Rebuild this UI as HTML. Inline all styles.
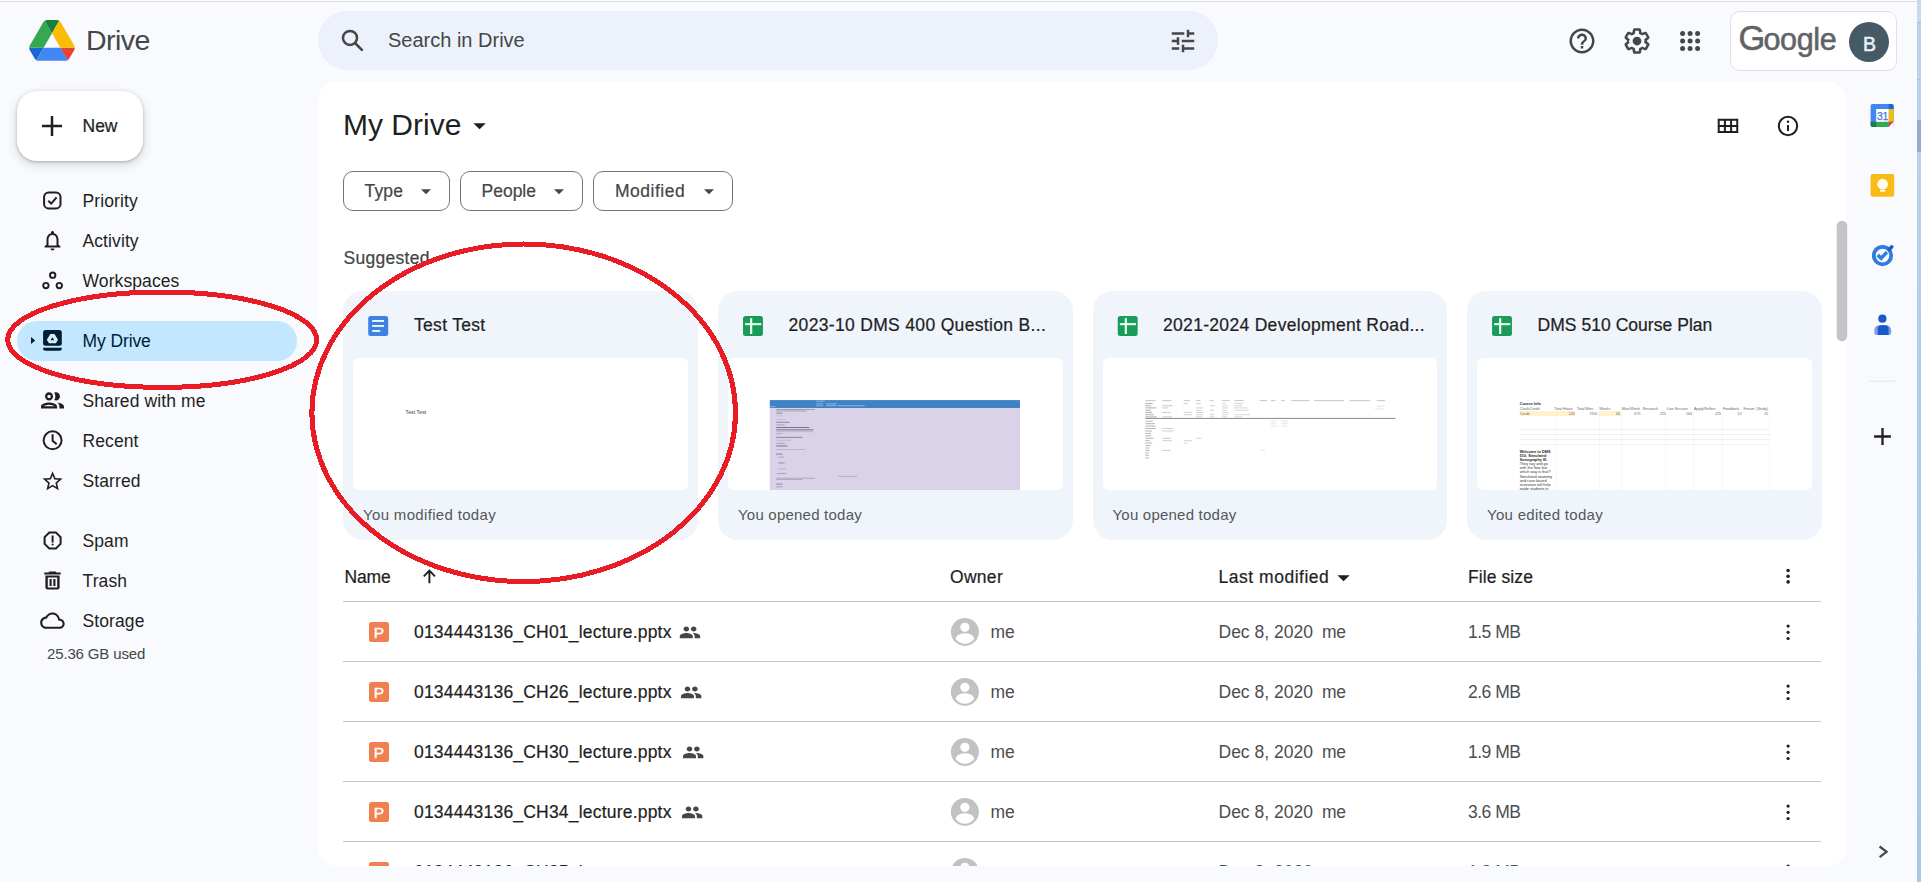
<!DOCTYPE html>
<html lang="en">
<head>
<meta charset="utf-8">
<title>My Drive - Google Drive</title>
<style>
*{box-sizing:border-box;margin:0;padding:0}
html,body{width:1921px;height:882px;overflow:hidden}
body{background:#f8fafd;font-family:"Liberation Sans",sans-serif;color:#1f1f1f;position:relative}
.abs{position:absolute}
.t{position:absolute;white-space:nowrap;line-height:1}
.m{-webkit-text-stroke:.22px currentColor}
svg{position:absolute;overflow:visible}
#topline{left:0;top:0;width:1921px;height:2px;background:linear-gradient(#fff 0,#fff 1px,#d9d9d9 1px,#d9d9d9 2px)}
#rstripe{left:1916.500px;top:0;width:4.500px;height:882px;background:linear-gradient(#c8daee 0,#c8daee 22px,#a9bfda 22px,#a9bfda 23px,#bcd2ea 23px,#bcd2ea 79px,#a9bfda 79px,#a9bfda 80px,#b9d0ea 80px,#b9d0ea 120px,#98aac5 120px,#98aac5 152px,#b9d0e8 152px,#a9c8e4 882px)}
#brand{left:86px;top:26px;font-size:28.5px;color:#444746;letter-spacing:-.55px}
#search{left:318px;top:11.200px;width:900px;height:58.600px;border-radius:29.300px;background:#ecf1fb}
#searchtxt{left:388px;top:30px;font-size:20px;color:#444746}
#acct{left:1730px;top:11px;width:167px;height:60px;border-radius:10px;background:#fff;border:1px solid #dfe1e6}
#avatar{left:1849px;top:22px;width:40px;height:40px;border-radius:50%;background:#455a64}
#avatarB{left:1849.500px;top:35px;width:40px;text-align:center;font-size:19.5px;color:#e8f0f8;-webkit-text-stroke:.5px #e8f0f8}
#gword{left:1738.500px;top:18px;font-size:34.4px;line-height:40px;color:#5f6368;-webkit-text-stroke:.55px #5f6368;letter-spacing:-1.8px}#gword span{font-size:30.5px;letter-spacing:-.35px}
#newbtn{left:17px;top:91px;width:126px;height:70px;border-radius:20px;background:#fff;box-shadow:0 1px 3px rgba(60,64,67,.35),0 4px 8px 2px rgba(60,64,67,.12)}
#newtxt{left:82.500px;top:118px;font-size:17.5px;color:#1f1f1f}
.nav{left:82.500px;font-size:17.5px;color:#1f1f1f;letter-spacing:.1px}
#sel{left:17px;top:321px;width:280px;height:40px;border-radius:20px;background:#c2e7ff}
#used{left:47px;top:646px;font-size:15px;color:#444746;letter-spacing:-.15px}
#panel{left:317.700px;top:81.300px;width:1529.500px;height:784.700px;border-radius:20px;background:#fff;overflow:hidden}
#title{left:343px;top:109.500px;font-size:30px;color:#1f1f1f}
.chip{position:absolute;top:171px;height:40px;border:1px solid #747775;border-radius:10px}
.chiptxt{top:183px;font-size:17.5px;color:#444746}
#sugg{left:343.500px;top:249.500px;font-size:17.5px;color:#444746;letter-spacing:.28px}
.card{position:absolute;top:291px;width:355px;height:249px;border-radius:20px;background:#f0f4fb}
.thumb{position:absolute;top:358px;width:335px;height:132px;border-radius:6px;background:#fff;overflow:hidden}
.ctitle{top:317px;font-size:17.5px;color:#1f1f1f}
.csub{top:506.6px;font-size:15px;color:#55585a}
.hdr{top:569px;font-size:17.5px;color:#1f1f1f}
.hline{position:absolute;left:343px;width:1478px;height:1px;background:#c7c7c7}
.fname{left:414px;font-size:17.5px;color:#1f1f1f;letter-spacing:.2px}
.cell{font-size:17.5px;color:#4b4e50}
.ppt{position:absolute;left:369px;width:20px;height:20px;border-radius:2.5px;background:#f0804f}
.ppt b{position:absolute;left:0;top:2.5px;width:20px;text-align:center;font-size:15.5px;font-weight:normal;-webkit-text-stroke:.4px #fff;line-height:1;color:#fff}
#botcover{left:0;top:866px;width:1917px;height:16px;background:#f8fafd}
#th4 i{position:absolute;display:block}#th4 span{position:absolute;white-space:nowrap;font-size:3.7px;line-height:1;color:#666}#th4 span.b{font-weight:bold;color:#222;font-size:3.8px}#th4 span.k{color:#333;font-size:3.8px}
#tt{left:405.500px;top:410px;font-size:5.3px;color:#444}
</style>
</head>
<body>
<div id="topline" class="abs"></div>
<div id="rstripe" class="abs"></div>

<!-- HEADER -->
<div id="brand" class="t">Drive</div>
<div id="search" class="abs"></div>
<div id="searchtxt" class="t">Search in Drive</div>
<div id="acct" class="abs"></div>
<div id="gword" class="t">G<span>oogle</span></div>
<div id="avatar" class="abs"></div>
<div id="avatarB" class="t">B</div>

<!-- SIDEBAR -->
<div id="newbtn" class="abs"></div>
<div id="newtxt" class="t m">New</div>
<div id="sel" class="abs"></div>
<div class="t nav" style="top:193px">Priority</div>
<div class="t nav" style="top:233px">Activity</div>
<div class="t nav" style="top:273px">Workspaces</div>
<div class="t nav" style="top:333px;color:#001d35;letter-spacing:-.1px">My Drive</div>
<div class="t nav" style="top:393px">Shared with me</div>
<div class="t nav" style="top:433px">Recent</div>
<div class="t nav" style="top:473px">Starred</div>
<div class="t nav" style="top:533px">Spam</div>
<div class="t nav" style="top:573px">Trash</div>
<div class="t nav" style="top:613px">Storage</div>
<div id="used" class="t">25.36 GB used</div>

<!-- MAIN PANEL -->
<div id="panel" class="abs"></div>
<div id="title" class="t">My Drive</div>
<div class="chip" style="left:343px;width:107px"></div>
<div class="chip" style="left:460px;width:123px"></div>
<div class="chip" style="left:593px;width:140px"></div>
<div class="t chiptxt m" style="left:364.500px;letter-spacing:.2px">Type</div>
<div class="t chiptxt m" style="left:481.500px;letter-spacing:0">People</div>
<div class="t chiptxt m" style="left:615px;letter-spacing:.5px">Modified</div>
<div id="sugg" class="t m">Suggested</div>

<!-- CARDS -->
<div class="card" style="left:343px"></div>
<div class="card" style="left:718px"></div>
<div class="card" style="left:1093px;width:354px"></div>
<div class="card" style="left:1467px"></div>
<div class="thumb" id="th1" style="left:353px"></div>
<div class="thumb" id="th2" style="left:728px"></div>
<div class="thumb" id="th3" style="left:1103px;width:334px"></div>
<div class="thumb" id="th4" style="left:1477px">
<i style="left:42.7px;top:52.9px;width:55.3px;height:4.7px;background:#fff2cc"></i>
<i style="left:122.3px;top:52.9px;width:21.6px;height:4.7px;background:#fff2cc"></i>
<i style="left:42.7px;top:71.2px;width:250.2px;height:.8px;background:rgba(0,0,0,.05)"></i>
<i style="left:42.7px;top:75.9px;width:250.2px;height:.8px;background:rgba(0,0,0,.05)"></i>
<i style="left:42.7px;top:81.2px;width:250.2px;height:.8px;background:rgba(0,0,0,.05)"></i>
<i style="left:42.7px;top:86.2px;width:250.2px;height:.8px;background:rgba(0,0,0,.05)"></i>
<i style="left:78.8px;top:52.9px;width:.8px;height:78.7px;background:rgba(0,0,0,.03)"></i>
<i style="left:121.9px;top:52.9px;width:.8px;height:78.7px;background:rgba(0,0,0,.03)"></i>
<i style="left:143.5px;top:52.9px;width:.8px;height:78.7px;background:rgba(0,0,0,.03)"></i>
<i style="left:188.4px;top:52.9px;width:.8px;height:78.7px;background:rgba(0,0,0,.03)"></i>
<i style="left:215.6px;top:52.9px;width:.8px;height:78.7px;background:rgba(0,0,0,.03)"></i>
<i style="left:244.7px;top:52.9px;width:.8px;height:78.7px;background:rgba(0,0,0,.03)"></i>
<i style="left:291.5px;top:52.9px;width:.8px;height:78.7px;background:rgba(0,0,0,.03)"></i>
<span class="b" style="left:42.7px;top:44.5px">Course Info</span>
<span class="" style="left:42.7px;top:49.6px">Clock/Credit</span>
<span class="" style="left:77.3px;top:49.6px">Total Hours</span>
<span class="" style="left:99.8px;top:49.6px">Total Mins</span>
<span class="" style="left:122.3px;top:49.6px">Weeks</span>
<span class="" style="left:144.8px;top:49.6px">Mins/Week</span>
<span class="" style="left:165.4px;top:49.6px">Research</span>
<span class="" style="left:189.8px;top:49.6px">Live Session</span>
<span class="" style="left:216.9px;top:49.6px">Apply/Reflect</span>
<span class="" style="left:246.0px;top:49.6px">Feedback</span>
<span class="" style="left:266.6px;top:49.6px">Forum&nbsp; (Study)</span>
<span class="" style="left:42.7px;top:54.8px">Credit</span>
<span class="" style="right:237.1px;top:54.8px">120</span>
<span class="" style="right:214.6px;top:54.8px">7200</span>
<span class="" style="right:192.1px;top:54.8px">16</span>
<span class="" style="right:171.5px;top:54.8px">675</span>
<span class="" style="right:146.2px;top:54.8px">225</span>
<span class="" style="right:119.9px;top:54.8px">164</span>
<span class="" style="right:90.9px;top:54.8px">225</span>
<span class="" style="right:70.3px;top:54.8px">52</span>
<span class="" style="right:44.0px;top:54.8px">25</span>
<span class="b" style="left:42.7px;top:93.1px">Welcome to DMS</span>
<span class="b" style="left:42.7px;top:97.2px">510, Simulated</span>
<span class="b" style="left:42.7px;top:101.2px">Sonography III.</span>
<span class="k" style="left:42.7px;top:105.3px">They say and go</span>
<span class="k" style="left:42.7px;top:109.3px">with the flow but</span>
<span class="k" style="left:42.7px;top:113.4px">which way is that?</span>
<span class="k" style="left:42.7px;top:117.5px">Simulated anatomy</span>
<span class="k" style="left:42.7px;top:121.5px">and case based</span>
<span class="k" style="left:42.7px;top:125.6px">scenarios will help</span>
<span class="k" style="left:42.7px;top:129.6px">guide students in</span>
</div>
<div id="tt" class="t">Test Test</div>
<div class="t ctitle m" style="left:414px;letter-spacing:0.3px">Test Test</div>
<div class="t ctitle m" style="left:788.5px;letter-spacing:0.33px">2023-10 DMS 400 Question B...</div>
<div class="t ctitle m" style="left:1163px;letter-spacing:0.31px">2021-2024 Development Road...</div>
<div class="t ctitle m" style="left:1537.5px;letter-spacing:0.04px">DMS 510 Course Plan</div>
<div class="t csub" style="left:363px;letter-spacing:0.33px">You modified today</div>
<div class="t csub" style="left:738px;letter-spacing:0.22px">You opened today</div>
<div class="t csub" style="left:1112.5px;letter-spacing:0.22px">You opened today</div>
<div class="t csub" style="left:1487px;letter-spacing:0.3px">You edited today</div>

<!-- LIST -->
<div class="t hdr m" style="left:344.500px;letter-spacing:-.15px">Name</div>
<div class="t hdr m" style="left:950px;letter-spacing:.29px">Owner</div>
<div class="t hdr m" style="left:1218.500px;letter-spacing:.52px">Last modified</div>
<div class="t hdr m" style="left:1468px;letter-spacing:.09px">File size</div>
<div class="hline" style="top:601px"></div>
<div class="hline" style="top:661px"></div>
<div class="hline" style="top:721px"></div>
<div class="hline" style="top:781px"></div>
<div class="hline" style="top:841px"></div>
<div class="ppt" style="top:622px"><b>P</b></div>
<div class="t fname m" style="top:624px">0134443136_CH01_lecture.pptx</div>
<div class="t cell" style="left:990.500px;top:624px">me</div>
<div class="t cell" style="left:1218.500px;top:624px">Dec 8, 2020</div>
<div class="t cell" style="left:1322px;top:624px;letter-spacing:-.4px">me</div>
<div class="t cell" style="left:1468px;top:624px;letter-spacing:-.5px">1.5 MB</div>
<div class="ppt" style="top:682px"><b>P</b></div>
<div class="t fname m" style="top:684px">0134443136_CH26_lecture.pptx</div>
<div class="t cell" style="left:990.500px;top:684px">me</div>
<div class="t cell" style="left:1218.500px;top:684px">Dec 8, 2020</div>
<div class="t cell" style="left:1322px;top:684px;letter-spacing:-.4px">me</div>
<div class="t cell" style="left:1468px;top:684px;letter-spacing:-.5px">2.6 MB</div>
<div class="ppt" style="top:742px"><b>P</b></div>
<div class="t fname m" style="top:744px">0134443136_CH30_lecture.pptx</div>
<div class="t cell" style="left:990.500px;top:744px">me</div>
<div class="t cell" style="left:1218.500px;top:744px">Dec 8, 2020</div>
<div class="t cell" style="left:1322px;top:744px;letter-spacing:-.4px">me</div>
<div class="t cell" style="left:1468px;top:744px;letter-spacing:-.5px">1.9 MB</div>
<div class="ppt" style="top:802px"><b>P</b></div>
<div class="t fname m" style="top:804px">0134443136_CH34_lecture.pptx</div>
<div class="t cell" style="left:990.500px;top:804px">me</div>
<div class="t cell" style="left:1218.500px;top:804px">Dec 8, 2020</div>
<div class="t cell" style="left:1322px;top:804px;letter-spacing:-.4px">me</div>
<div class="t cell" style="left:1468px;top:804px;letter-spacing:-.5px">3.6 MB</div>
<div class="ppt" style="top:862px"><b>P</b></div>
<div class="t fname m" style="top:864px">0134443136_CH35_lecture.pptx</div>
<div class="t cell" style="left:990.500px;top:864px">me</div>
<div class="t cell" style="left:1218.500px;top:864px">Dec 8, 2020</div>
<div class="t cell" style="left:1322px;top:864px;letter-spacing:-.4px">me</div>
<div class="t cell" style="left:1468px;top:864px;letter-spacing:-.5px">1.8 MB</div>

<!-- ICONS -->
<svg id="icons" width="1921" height="882" viewBox="0 0 1921 882" style="left:0;top:0">
<g id="thumb2"><rect x="769.8" y="400.1" width="250.2" height="89.9" fill="#d9d2e9"/><rect x="769.8" y="400.1" width="250.2" height="7.9" fill="#3f83c5"/>
<rect x="816.2" y="400.7" width="8.4" height="1" fill="#9cc3ea" opacity=".8"/>
<rect x="816.2" y="403.3" width="7.0" height="1" fill="#9cc3ea" opacity=".8"/>
<rect x="826.1" y="403.3" width="10.5" height="1" fill="#9cc3ea" opacity=".8"/>
<rect x="816.2" y="405.2" width="7.0" height="1" fill="#9cc3ea" opacity=".8"/>
<rect x="826.1" y="405.2" width="10.5" height="1" fill="#9cc3ea" opacity=".8"/>
<rect x="838.0" y="405.2" width="26.7" height="1" fill="#9cc3ea" opacity=".8"/>
<rect x="769.8" y="406.1" width="5.6" height="1" fill="#9cc3ea" opacity=".8"/>
<rect x="776.2" y="409.2" width="38.7" height="0.75" fill="#2a2440" opacity="0.40"/>
<rect x="776.2" y="410.6" width="30.2" height="0.75" fill="#2a2440" opacity="0.36"/>
<rect x="776.2" y="412.7" width="6.3" height="0.75" fill="#2a2440" opacity="0.58"/>
<rect x="776.2" y="415.5" width="6.3" height="0.75" fill="#2a2440" opacity="0.14"/>
<rect x="776.2" y="419.0" width="9.1" height="0.75" fill="#2a2440" opacity="0.14"/>
<rect x="776.2" y="421.8" width="13.4" height="0.75" fill="#2a2440" opacity="0.58"/>
<rect x="776.2" y="424.6" width="8.4" height="0.75" fill="#2a2440" opacity="0.36"/>
<rect x="776.2" y="427.0" width="33.0" height="0.9" fill="#2a2440" opacity="0.61"/>
<rect x="776.2" y="429.4" width="37.2" height="0.9" fill="#2a2440" opacity="0.61"/>
<rect x="776.2" y="431.4" width="37.2" height="0.75" fill="#2a2440" opacity="0.22"/>
<rect x="776.2" y="433.4" width="6.3" height="0.75" fill="#2a2440" opacity="0.29"/>
<rect x="776.2" y="436.9" width="26.0" height="0.75" fill="#2a2440" opacity="0.58"/>
<rect x="776.2" y="439.8" width="15.5" height="0.75" fill="#2a2440" opacity="0.18"/>
<rect x="776.2" y="442.9" width="8.4" height="0.75" fill="#2a2440" opacity="0.36"/>
<rect x="776.2" y="445.5" width="11.2" height="0.9" fill="#2a2440" opacity="0.61"/>
<rect x="776.2" y="449.2" width="28.8" height="0.75" fill="#2a2440" opacity="0.22"/>
<rect x="776.2" y="453.7" width="6.3" height="0.75" fill="#2a2440" opacity="0.58"/>
<rect x="778.3" y="456.7" width="5.6" height="0.75" fill="#2a2440" opacity="0.29"/>
<rect x="778.3" y="462.6" width="6.3" height="0.75" fill="#2a2440" opacity="0.50"/>
<rect x="778.3" y="468.5" width="7.7" height="0.75" fill="#2a2440" opacity="0.22"/>
<rect x="776.9" y="473.1" width="9.1" height="0.75" fill="#2a2440" opacity="0.36"/>
<rect x="776.2" y="477.8" width="38.7" height="0.75" fill="#2a2440" opacity="0.32"/>
<rect x="776.2" y="479.2" width="26.0" height="0.75" fill="#2a2440" opacity="0.29"/>
<rect x="776.2" y="483.7" width="6.3" height="0.75" fill="#2a2440" opacity="0.58"/>
<rect x="776.2" y="486.5" width="6.3" height="0.75" fill="#2a2440" opacity="0.36"/>
<rect x="838.0" y="475.9" width="19.0" height="0.75" fill="#2a2440" opacity="0.25"/>
</g>
<g id="thumb3">
<rect x="1145.3" y="400.1" width="10.3" height="1" fill="#9a9a9a" opacity=".55"/>
<rect x="1162.2" y="400.1" width="9.4" height="1" fill="#9a9a9a" opacity=".55"/>
<rect x="1183.7" y="400.1" width="6.6" height="1" fill="#9a9a9a" opacity=".55"/>
<rect x="1195.9" y="400.1" width="4.7" height="1" fill="#9a9a9a" opacity=".55"/>
<rect x="1209.9" y="400.1" width="3.7" height="1" fill="#9a9a9a" opacity=".55"/>
<rect x="1222.1" y="400.1" width="7.5" height="1" fill="#9a9a9a" opacity=".55"/>
<rect x="1234.3" y="400.1" width="9.4" height="1" fill="#9a9a9a" opacity=".55"/>
<rect x="1259.6" y="400.1" width="7.5" height="1" fill="#9a9a9a" opacity=".55"/>
<rect x="1270.8" y="400.1" width="4.7" height="1" fill="#9a9a9a" opacity=".55"/>
<rect x="1281.2" y="400.1" width="3.7" height="1" fill="#9a9a9a" opacity=".55"/>
<rect x="1291.5" y="400.1" width="17.8" height="1" fill="#9a9a9a" opacity=".55"/>
<rect x="1314.0" y="400.1" width="30.0" height="1" fill="#9a9a9a" opacity=".55"/>
<rect x="1349.6" y="400.1" width="20.6" height="1" fill="#9a9a9a" opacity=".55"/>
<rect x="1376.7" y="400.1" width="8.4" height="1" fill="#9a9a9a" opacity=".55"/>
<rect x="1145.3" y="402.9" width="7.3" height="1" fill="#777" opacity="0.6"/>
<rect x="1183.7" y="402.9" width="4.6" height="1" fill="#777" opacity="0.35"/>
<rect x="1195.9" y="402.9" width="4.8" height="1" fill="#777" opacity="0.35"/>
<rect x="1222.1" y="402.9" width="3.4" height="1" fill="#777" opacity="0.3"/>
<rect x="1234.3" y="402.9" width="8.2" height="1" fill="#777" opacity="0.3"/>
<rect x="1145.3" y="405.2" width="5.8" height="1" fill="#777" opacity="0.6"/>
<rect x="1162.2" y="405.2" width="10.7" height="1" fill="#777" opacity="0.4"/>
<rect x="1209.9" y="405.2" width="5.2" height="1" fill="#777" opacity="0.35"/>
<rect x="1222.1" y="405.2" width="5.0" height="1" fill="#777" opacity="0.3"/>
<rect x="1234.3" y="405.2" width="8.0" height="1" fill="#777" opacity="0.3"/>
<rect x="1145.3" y="407.4" width="10.9" height="1" fill="#777" opacity="0.6"/>
<rect x="1162.2" y="407.4" width="6.1" height="1" fill="#777" opacity="0.4"/>
<rect x="1195.9" y="407.4" width="6.8" height="1" fill="#777" opacity="0.35"/>
<rect x="1222.1" y="407.4" width="6.0" height="1" fill="#777" opacity="0.3"/>
<rect x="1234.3" y="407.4" width="12.8" height="1" fill="#777" opacity="0.3"/>
<rect x="1145.3" y="409.7" width="5.6" height="1" fill="#777" opacity="0.6"/>
<rect x="1195.9" y="409.7" width="5.1" height="1" fill="#777" opacity="0.35"/>
<rect x="1209.9" y="409.7" width="4.1" height="1" fill="#777" opacity="0.35"/>
<rect x="1222.1" y="409.7" width="4.6" height="1" fill="#777" opacity="0.3"/>
<rect x="1234.3" y="409.7" width="14.3" height="1" fill="#777" opacity="0.3"/>
<rect x="1145.3" y="411.9" width="6.8" height="1" fill="#777" opacity="0.6"/>
<rect x="1162.2" y="411.9" width="8.7" height="1" fill="#777" opacity="0.4"/>
<rect x="1183.7" y="411.9" width="8.2" height="1" fill="#777" opacity="0.35"/>
<rect x="1195.9" y="411.9" width="7.5" height="1" fill="#777" opacity="0.35"/>
<rect x="1222.1" y="411.9" width="6.5" height="1" fill="#777" opacity="0.3"/>
<rect x="1145.3" y="414.2" width="8.4" height="1" fill="#777" opacity="0.6"/>
<rect x="1183.7" y="414.2" width="8.4" height="1" fill="#777" opacity="0.35"/>
<rect x="1195.9" y="414.2" width="7.0" height="1" fill="#777" opacity="0.35"/>
<rect x="1209.9" y="414.2" width="4.5" height="1" fill="#777" opacity="0.35"/>
<rect x="1222.1" y="414.2" width="5.8" height="1" fill="#777" opacity="0.3"/>
<rect x="1234.3" y="414.2" width="15.7" height="1" fill="#777" opacity="0.3"/>
<rect x="1145.3" y="416.4" width="11.5" height="1" fill="#777" opacity="0.6"/>
<rect x="1162.2" y="416.4" width="9.6" height="1" fill="#777" opacity="0.4"/>
<rect x="1195.9" y="416.4" width="6.0" height="1" fill="#777" opacity="0.35"/>
<rect x="1209.9" y="416.4" width="4.8" height="1" fill="#777" opacity="0.35"/>
<rect x="1222.1" y="416.4" width="4.9" height="1" fill="#777" opacity="0.3"/>
<rect x="1234.3" y="416.4" width="7.7" height="1" fill="#777" opacity="0.3"/>
<rect x="1145.3" y="417.9" width="250.2" height="1" fill="#8a8a8a"/>
<rect x="1145.3" y="420.7" width="7.5" height="1" fill="#777" opacity="0.54"/>
<rect x="1145.3" y="423.2" width="9.7" height="1" fill="#777" opacity="0.54"/>
<rect x="1145.3" y="425.6" width="10.4" height="1" fill="#777" opacity="0.54"/>
<rect x="1145.3" y="428.0" width="10.5" height="1" fill="#777" opacity="0.54"/>
<rect x="1162.2" y="428.0" width="10.4" height="1" fill="#777" opacity="0.36"/>
<rect x="1145.3" y="430.5" width="6.7" height="1" fill="#777" opacity="0.54"/>
<rect x="1162.2" y="430.5" width="11.0" height="1" fill="#777" opacity="0.36"/>
<rect x="1145.3" y="432.9" width="5.8" height="1" fill="#777" opacity="0.54"/>
<rect x="1145.3" y="435.3" width="6.0" height="1" fill="#777" opacity="0.54"/>
<rect x="1145.3" y="437.8" width="8.2" height="1" fill="#777" opacity="0.54"/>
<rect x="1162.2" y="437.8" width="9.1" height="1" fill="#777" opacity="0.36"/>
<rect x="1195.9" y="437.8" width="5.7" height="1" fill="#777" opacity="0.32"/>
<rect x="1145.3" y="440.2" width="4.5" height="1" fill="#777" opacity="0.54"/>
<rect x="1162.2" y="440.2" width="9.8" height="1" fill="#777" opacity="0.36"/>
<rect x="1183.7" y="440.2" width="8.1" height="1" fill="#777" opacity="0.32"/>
<rect x="1145.3" y="442.6" width="7.0" height="1" fill="#777" opacity="0.54"/>
<rect x="1183.7" y="442.6" width="3.7" height="1" fill="#777" opacity="0.32"/>
<rect x="1145.3" y="445.1" width="5.6" height="1" fill="#777" opacity="0.54"/>
<rect x="1145.3" y="447.5" width="4.1" height="1" fill="#777" opacity="0.54"/>
<rect x="1145.3" y="449.9" width="4.3" height="1" fill="#777" opacity="0.54"/>
<rect x="1162.2" y="449.9" width="8.6" height="1" fill="#777" opacity="0.36"/>
<rect x="1145.3" y="452.4" width="3.7" height="1" fill="#777" opacity="0.54"/>
<rect x="1145.3" y="454.8" width="3.7" height="1" fill="#777" opacity="0.54"/>
<rect x="1145.3" y="457.3" width="3.7" height="1" fill="#777" opacity="0.54"/>
<rect x="1270.8" y="420.7" width="5.6" height="1" fill="#999" opacity=".25"/>
<rect x="1281.2" y="420.7" width="6.6" height="1" fill="#999" opacity=".25"/>
<rect x="1270.8" y="423.2" width="5.6" height="1" fill="#999" opacity=".25"/>
<rect x="1281.2" y="423.2" width="6.6" height="1" fill="#999" opacity=".25"/>
<rect x="1270.8" y="425.6" width="5.6" height="1" fill="#999" opacity=".25"/>
<rect x="1281.2" y="425.6" width="6.6" height="1" fill="#999" opacity=".25"/>
<rect x="1259.6" y="449.8" width="5.6" height="1" fill="#999" opacity=".25"/>
<rect x="1376.7" y="405.7" width="7.5" height="1" fill="#999" opacity=".25"/>
<rect x="1374.9" y="408.5" width="9.4" height="1" fill="#999" opacity=".25"/>
</g>
<!-- Drive logo -->
<g transform="translate(29.2,20.1) scale(0.5223)">
<path d="m6.6 66.85 3.85 6.65c.8 1.4 1.95 2.5 3.3 3.3l13.750-23.8h-27.500c0 1.550.4 3.100 1.200 4.500z" fill="#1967d2"/>
<path d="m43.650 25-13.750-23.800c-1.350.8-2.500 1.900-3.300 3.300l-25.400 44a9.060 9.060 0 0 0 -1.200 4.500h27.500z" fill="#34a853"/>
<path d="m73.550 76.800c1.350-.8 2.500-1.900 3.300-3.300l1.600-2.750 7.650-13.250c.8-1.400 1.200-2.950 1.200-4.500h-27.502l5.852 11.500z" fill="#ea4335"/>
<path d="m43.650 25 13.750-23.800c-1.350-.8-2.900-1.200-4.500-1.200h-18.500c-1.600 0-3.150.45-4.500 1.200z" fill="#188038"/>
<path d="m59.800 53h-32.300l-13.750 23.800c1.350.8 2.900 1.200 4.500 1.200h50.800c1.600 0 3.150-.45 4.500-1.200z" fill="#4285f4"/>
<path d="m73.400 26.500-12.700-22c-.8-1.400-1.950-2.500-3.300-3.300l-13.750 23.800 16.150 28h27.450c0-1.550-.4-3.100-1.200-4.500z" fill="#fbbc04"/>
</g>
<!-- search -->
<g fill="none" stroke="#444746" stroke-width="2.5">
<circle cx="350" cy="37.9" r="7"/><path d="M355 43 L362.6 50.6"/>
</g>
<!-- tune -->
<g transform="translate(1168,26) scale(1.25)" fill="#444746"><path d="M3 17v2h6v-2H3zM3 5v2h10V5H3zm10 16v-2h8v-2h-8v-2h-2v6h2zM7 9v2H3v2h4v2h2V9H7zm14 4v-2H11v2h10zm-6-4h2V7h4V5h-4V3h-2v6z"/></g>
<!-- help -->
<g transform="translate(1567,26) scale(1.25)" fill="#444746"><path d="M11 18h2v-2h-2v2zm1-16C6.480 2 2 6.480 2 12s4.480 10 10 10 10-4.480 10-10S17.520 2 12 2zm0 18c-4.410 0-8-3.590-8-8s3.590-8 8-8 8 3.590 8 8-3.590 8-8 8zm0-14c-2.210 0-4 1.790-4 4h2c0-1.100.9-2 2-2s2 .9 2 2c0 2-3 1.750-3 5h2c0-2.250 3-2.500 3-5 0-2.210-1.790-4-4-4z"/></g>
<!-- settings gear -->
<g transform="translate(1622,26) scale(1.25)" fill="#444746"><path d="M13.850 22.250h-3.700c-.74 0-1.360-.54-1.450-1.270l-.27-1.890c-.27-.14-.53-.29-.79-.46l-1.800.72c-.7.260-1.470-.03-1.810-.65L2.200 15.530c-.35-.66-.2-1.440.36-1.880l1.530-1.190c-.01-.15-.02-.3-.02-.46 0-.15.010-.31.020-.46l-1.520-1.190c-.59-.45-.74-1.260-.37-1.880l1.850-3.190c.34-.62 1.110-.9 1.790-.63l1.810.73c.26-.17.520-.32.780-.46l.27-1.910c.09-.7.710-1.250 1.440-1.250h3.700c.74 0 1.360.54 1.450 1.270l.27 1.890c.27.140.53.290.79.460l1.800-.72c.71-.26 1.480.03 1.820.65l1.840 3.180c.36.660.2 1.440-.36 1.880l-1.520 1.190c.1.150.2.300.2.460s-.1.310-.2.460l1.520 1.190c.56.450.72 1.230.37 1.860l-1.860 3.220c-.34.620-1.110.9-1.800.63l-1.800-.72c-.26.170-.52.320-.78.460l-.27 1.910c-.1.680-.72 1.220-1.460 1.220zm-3.230-2h2.760l.37-2.550.53-.22c.44-.18.880-.44 1.340-.78l.45-.34 2.380.96 1.380-2.400-2.030-1.580.07-.56c.03-.26.060-.51.060-.78s-.03-.53-.06-.78l-.07-.56 2.030-1.580-1.390-2.400-2.390.96-.45-.35c-.42-.32-.87-.58-1.330-.77l-.52-.22-.37-2.550h-2.760l-.37 2.550-.53.210c-.44.190-.88.440-1.340.79l-.45.330-2.380-.95-1.390 2.390 2.030 1.580-.07.560a7 7 0 0 0-.6.790c0 .26.020.53.060.78l.7.560-2.030 1.580 1.380 2.400 2.390-.96.450.35c.43.330.86.580 1.330.77l.53.220.38 2.550z"/><circle cx="12" cy="12" r="3.500"/></g>
<!-- apps -->
<g fill="#444746">
<circle cx="1682.600" cy="33.400" r="2.500"/><circle cx="1690.100" cy="33.400" r="2.500"/><circle cx="1697.600" cy="33.400" r="2.500"/>
<circle cx="1682.600" cy="40.900" r="2.500"/><circle cx="1690.100" cy="40.900" r="2.500"/><circle cx="1697.600" cy="40.900" r="2.500"/>
<circle cx="1682.600" cy="48.400" r="2.500"/><circle cx="1690.100" cy="48.400" r="2.500"/><circle cx="1697.600" cy="48.400" r="2.500"/>
</g>
<!-- New plus -->
<g stroke="#1f1f1f" stroke-width="2.500" fill="none"><path d="M42 126H62M52 116V136"/></g>
<!-- Priority -->
<g fill="none" stroke="#1f1f1f" stroke-width="2"><rect x="44.100" y="192.600" width="16.400" height="15.800" rx="4.500"/><path d="M48.300 200.800 L51.200 203.600 L56.600 197.300"/></g>
<!-- Activity bell -->
<g transform="translate(40.500,228.500)" fill="#1f1f1f"><path d="M12 22c1.100 0 2-.9 2-2h-4c0 1.100.9 2 2 2zm6-6v-5c0-3.070-1.630-5.640-4.500-6.320V4c0-.83-.67-1.500-1.500-1.500s-1.500.67-1.500 1.500v.68C7.640 5.360 6 7.920 6 11v5l-2 2v1h16v-1l-2-2zm-2 1H8v-6c0-2.480 1.510-4.500 4-4.500s4 2.020 4 4.500v6z"/></g>
<!-- Workspaces -->
<g fill="none" stroke="#1f1f1f" stroke-width="1.900"><circle cx="52.700" cy="275.200" r="2.700"/><circle cx="45.900" cy="285.600" r="2.700"/><circle cx="59.300" cy="285.600" r="2.700"/></g>
<!-- My Drive -->
<g fill="#001d35">
<path d="M31 337 L35.200 340.500 L31 344z"/>
<rect x="43.100" y="330" width="18.700" height="15.700" rx="2.500"/>
<path d="M43.100 347.800h18.700v0.500a2.500 2.500 0 0 1-2.500 2.500h-13.700a2.500 2.500 0 0 1-2.500-2.500z"/>
</g>
<path d="M50.300 333.900h4.200l3.500 5.900-2.100 3.500h-7l-2.100-3.500zM52.400 337.200l-1.800 3h3.600z" fill="#d6ecfb" fill-rule="evenodd"/>
<!-- Shared -->
<g transform="translate(38.700,386.600) scale(1.150)" fill="#1f1f1f"><path d="M9 13.750c-2.340 0-7 1.170-7 3.500V19h14v-1.750c0-2.330-4.660-3.500-7-3.500zM4.340 17c.84-.58 2.870-1.250 4.660-1.250s3.820.67 4.660 1.250H4.340zM9 12c1.930 0 3.500-1.570 3.500-3.500S10.930 5 9 5 5.500 6.570 5.500 8.500 7.070 12 9 12zm0-5c.83 0 1.500.67 1.500 1.500S9.830 10 9 10s-1.500-.67-1.500-1.500S8.170 7 9 7zm7.040 6.810c1.160.84 1.960 1.960 1.960 3.440V19h4v-1.750c0-2.020-3.500-3.170-5.960-3.440zM15 12c1.930 0 3.500-1.570 3.500-3.500S16.930 5 15 5c-.54 0-1.040.13-1.500.35.630.89 1 1.980 1 3.150s-.37 2.260-1 3.150c.46.220.96.350 1.500.350z"/></g>
<!-- Recent -->
<g fill="none" stroke="#1f1f1f" stroke-width="2"><circle cx="52.600" cy="440.300" r="9"/><path d="M52.600 434.300V440.700L56.700 444.300"/></g>
<!-- Starred -->
<g transform="translate(40.600,469.300)" fill="#1f1f1f"><path d="M22 9.240l-7.190-.62L12 2 9.190 8.630 2 9.240l5.460 4.730L5.820 21 12 17.270 18.180 21l-1.630-7.030L22 9.240zM12 15.400l-3.760 2.270 1-4.280-3.320-2.880 4.380-.38L12 6.100l1.710 4.040 4.380.38-3.320 2.880 1 4.280L12 15.400z"/></g>
<!-- Spam -->
<g transform="translate(40.600,528.500)" fill="#1f1f1f"><path d="M15.730 3H8.270L3 8.270v7.460L8.270 21h7.460L21 15.730V8.270L15.730 3zM19 14.900L14.900 19H9.100L5 14.900V9.100L9.100 5h5.800L19 9.100v5.800z"/><circle cx="12" cy="16" r="1.100"/><path d="M11 7h2v7h-2z"/></g>
<!-- Trash -->
<g transform="translate(52.500,568.400) scale(1.18,1) translate(-12,0)" fill="#1f1f1f"><path d="M16 9v10H8V9h8m-1.500-6h-5l-1 1H5v2h14V4h-3.500l-1-1zM18 7H6v12c0 1.100.9 2 2 2h8c1.100 0 2-.9 2-2V7z"/><path d="M9.500 10.500h1.800v7h-1.800zM12.700 10.500h1.800v7h-1.800z"/></g>
<!-- Storage cloud -->
<g transform="translate(40.200,608.400) scale(1.020)" fill="#1f1f1f"><path d="M12 6c2.620 0 4.880 1.860 5.390 4.430l.3 1.500 1.530.11c1.560.1 2.780 1.410 2.780 2.960 0 1.650-1.350 3-3 3H6c-2.210 0-4-1.790-4-4 0-2.050 1.530-3.760 3.560-3.970l1.070-.11.500-.95C8.080 7.140 9.940 6 12 6m0-2C9.110 4 6.600 5.640 5.350 8.040 2.340 8.360 0 10.910 0 14c0 3.310 2.690 6 6 6h13c2.760 0 5-2.240 5-5 0-2.640-2.050-4.780-4.650-4.960C18.670 6.590 15.640 4 12 4z"/></g>
<!-- title caret + chip carets -->
<g fill="#1f1f1f"><path d="M473.400 123.200h12.400l-6.200 6.100z"/></g>
<g fill="#444746"><path d="M421 189.300h10l-5 5z"/><path d="M554 189.300h10l-5 5z"/><path d="M704 189.300h10l-5 5z"/></g>
<!-- grid + info -->
<g fill="none" stroke="#1f1f1f" stroke-width="2"><rect x="1718.700" y="119.750" width="18.550" height="12.250"/><path d="M1724.900 119.750v12.250M1731.100 119.750v12.250M1718.700 125.900h18.550"/><circle cx="1788" cy="126" r="9.200"/></g>
<g fill="#1f1f1f"><circle cx="1788" cy="121.800" r="1.200"/><rect x="1787" y="125" width="2" height="6"/></g>
<!-- sort arrows -->
<g fill="none" stroke="#1f1f1f" stroke-width="1.900"><path d="M429.400 583.300V571M423.800 576.300L429.400 570.700L435 576.300"/></g>
<g fill="#1f1f1f"><path d="M1337.400 575.200h12.300l-6.150 6.100z"/></g>
<!-- header 3 dots + row dots -->
<g fill="#1f1f1f"><circle cx="1788.100" cy="570.500" r="1.800"/><circle cx="1788.100" cy="576.200" r="1.800"/><circle cx="1788.100" cy="581.900" r="1.800"/></g>
<g fill="#1f1f1f"><circle cx="1788.100" cy="626.1" r="1.600"/><circle cx="1788.100" cy="632.3" r="1.600"/><circle cx="1788.100" cy="638.5" r="1.600"/></g>
<g transform="translate(678.9,622.2) scale(0.925,0.84)" fill="#444746"><path d="M16 11c1.660 0 2.990-1.340 2.990-3S17.660 5 16 5c-1.660 0-3 1.340-3 3s1.340 3 3 3zm-8 0c1.660 0 2.990-1.340 2.990-3S9.660 5 8 5C6.340 5 5 6.340 5 8s1.340 3 3 3zm0 2c-2.330 0-7 1.170-7 3.500V19h14v-2.500c0-2.330-4.670-3.500-7-3.500zm8 0c-.29 0-.62.020-.97.050 1.160.84 1.970 1.970 1.970 3.450V19h6v-2.500c0-2.330-4.670-3.500-7-3.500z"/></g>
<g><circle cx="964.900" cy="631.9" r="14" fill="#c2c2c2"/><circle cx="964.900" cy="627.3" r="4.600" fill="#fff"/><path d="M955.700 639.1c0-4.200 6.100-5.800 9.200-5.800s9.200 1.600 9.200 5.800a11.500 11.500 0 0 1-18.400 0z" fill="#fff"/></g>
<g fill="#1f1f1f"><circle cx="1788.100" cy="686.1" r="1.600"/><circle cx="1788.100" cy="692.3" r="1.600"/><circle cx="1788.100" cy="698.5" r="1.600"/></g>
<g transform="translate(680.1,682.2) scale(0.925,0.84)" fill="#444746"><path d="M16 11c1.660 0 2.990-1.340 2.990-3S17.660 5 16 5c-1.660 0-3 1.340-3 3s1.340 3 3 3zm-8 0c1.660 0 2.990-1.340 2.990-3S9.660 5 8 5C6.340 5 5 6.340 5 8s1.340 3 3 3zm0 2c-2.330 0-7 1.170-7 3.500V19h14v-2.500c0-2.330-4.670-3.500-7-3.500zm8 0c-.29 0-.62.020-.97.050 1.160.84 1.970 1.970 1.970 3.450V19h6v-2.500c0-2.330-4.670-3.500-7-3.500z"/></g>
<g><circle cx="964.900" cy="691.9" r="14" fill="#c2c2c2"/><circle cx="964.900" cy="687.3" r="4.600" fill="#fff"/><path d="M955.700 699.1c0-4.200 6.100-5.800 9.200-5.800s9.200 1.600 9.200 5.800a11.500 11.500 0 0 1-18.400 0z" fill="#fff"/></g>
<g fill="#1f1f1f"><circle cx="1788.100" cy="746.1" r="1.600"/><circle cx="1788.100" cy="752.3" r="1.600"/><circle cx="1788.100" cy="758.5" r="1.600"/></g>
<g transform="translate(682.1,742.2) scale(0.925,0.84)" fill="#444746"><path d="M16 11c1.660 0 2.990-1.340 2.990-3S17.660 5 16 5c-1.660 0-3 1.340-3 3s1.340 3 3 3zm-8 0c1.660 0 2.990-1.340 2.990-3S9.660 5 8 5C6.340 5 5 6.340 5 8s1.340 3 3 3zm0 2c-2.330 0-7 1.170-7 3.500V19h14v-2.500c0-2.330-4.670-3.500-7-3.500zm8 0c-.29 0-.62.020-.97.050 1.160.84 1.970 1.970 1.970 3.450V19h6v-2.500c0-2.330-4.670-3.500-7-3.500z"/></g>
<g><circle cx="964.900" cy="751.9" r="14" fill="#c2c2c2"/><circle cx="964.900" cy="747.3" r="4.600" fill="#fff"/><path d="M955.700 759.1c0-4.200 6.100-5.800 9.200-5.800s9.200 1.600 9.200 5.800a11.500 11.500 0 0 1-18.400 0z" fill="#fff"/></g>
<g fill="#1f1f1f"><circle cx="1788.100" cy="806.1" r="1.600"/><circle cx="1788.100" cy="812.3" r="1.600"/><circle cx="1788.100" cy="818.5" r="1.600"/></g>
<g transform="translate(681.1,802.2) scale(0.925,0.84)" fill="#444746"><path d="M16 11c1.660 0 2.990-1.340 2.990-3S17.660 5 16 5c-1.660 0-3 1.340-3 3s1.340 3 3 3zm-8 0c1.660 0 2.990-1.340 2.990-3S9.660 5 8 5C6.340 5 5 6.340 5 8s1.340 3 3 3zm0 2c-2.330 0-7 1.170-7 3.500V19h14v-2.500c0-2.330-4.670-3.500-7-3.500zm8 0c-.29 0-.62.020-.97.050 1.160.84 1.970 1.970 1.970 3.450V19h6v-2.500c0-2.330-4.670-3.500-7-3.500z"/></g>
<g><circle cx="964.900" cy="811.9" r="14" fill="#c2c2c2"/><circle cx="964.900" cy="807.3" r="4.600" fill="#fff"/><path d="M955.700 819.1c0-4.200 6.100-5.800 9.200-5.800s9.200 1.600 9.200 5.800a11.500 11.500 0 0 1-18.400 0z" fill="#fff"/></g>
<g><circle cx="964.900" cy="871.9" r="14" fill="#c2c2c2"/><circle cx="964.900" cy="867.3" r="4.600" fill="#fff"/></g>
<g fill="#1f1f1f"><circle cx="1788.100" cy="866.1" r="1.600"/></g>
<!-- Calendar -->
<g>
<rect x="1870.600" y="104" width="23" height="23" rx="2" fill="#4285f4"/>
<rect x="1888.700" y="109" width="4.900" height="12.800" fill="#fbbc04"/>
<rect x="1876.200" y="121.800" width="12.500" height="5.200" fill="#34a853"/>
<path d="M1870.600 121.800h5.600v5.200h-3.600a2 2 0 0 1-2-2z" fill="#188038"/>
<path d="M1888.700 104h2.900a2 2 0 0 1 2 2v3h-4.900z" fill="#1967d2"/>
<path d="M1888.700 121.800h4.900l-4.900 5.200z" fill="#ea4335"/>
<path d="M1893.600 121.800v5.200h-4.900z" fill="#f8fafd"/>
<rect x="1876.200" y="109" width="12.500" height="12.800" fill="#fff"/>
<text x="1882.400" y="119.600" font-family="Liberation Sans, sans-serif" font-size="10.500" fill="#3f74d1" stroke="#3f74d1" stroke-width=".25" text-anchor="middle" letter-spacing="-0.500">31</text>
</g>
<!-- Keep -->
<g>
<rect x="1870.600" y="174" width="23.600" height="22.800" rx="2" fill="#f9bb16"/>
<circle cx="1882.600" cy="184.200" r="5.400" fill="#fffcf0"/>
<rect x="1880" y="190" width="5.200" height="1.700" fill="#fffcf0"/>
</g>
<!-- Tasks -->
<g>
<circle cx="1882.500" cy="255.600" r="8.700" fill="none" stroke="#2f7de1" stroke-width="3.800"/>
<path d="M1877.700 254.900l3.400 3.400 5.800-6.200" fill="none" stroke="#2f7de1" stroke-width="3.500"/>
<path d="M1889.500 249.200l2.300-2.400" stroke="#1a5fc9" stroke-width="3.600" stroke-linecap="round"/>
</g>
<!-- Contacts -->
<g>
<path d="M1874.300 332.400v-2.100a5 5 0 0 1 5-5h6.900a5 5 0 0 1 5 5v2.100a2.500 2.500 0 0 1-2.500 2.500h-11.900a2.500 2.500 0 0 1-2.500-2.500z" fill="#7f9fe6"/>
<path d="M1877.800 334.900v-6a3.600 3.600 0 0 1 3.600-3.600h3.600a3.600 3.600 0 0 1 3.600 3.600v6z" fill="#1a57c9"/>
<circle cx="1882.400" cy="318.700" r="4.100" fill="#1a57c9"/>
</g>
<rect x="1869.500" y="380.700" width="26.400" height="1" fill="#e2e5ea"/>
<path d="M1874.100 436.500h16.800M1882.500 428.100v16.800" stroke="#1f1f1f" stroke-width="2.300" fill="none"/>
<path d="M1879.600 846.500l7 5.300-7 5.400" transform="" stroke="#444746" stroke-width="2.200" fill="none"/>
<!-- scrollbar thumb -->
<rect x="1836.700" y="220.800" width="10.500" height="120.500" rx="5.200" fill="#c4c4c4"/>
<!-- Docs icon -->
<g>
<rect x="368.200" y="316" width="20" height="20" rx="2.500" fill="#4080e4"/>
<rect x="372.200" y="320" width="11.800" height="1.900" fill="#e6ffff"/>
<rect x="372.200" y="325" width="11.800" height="1.900" fill="#e6ffff"/>
<rect x="372.200" y="330" width="8" height="1.900" fill="#e6ffff"/>
</g>
<g><rect x="743.05" y="316" width="19.900" height="20.100" rx="2.500" fill="#1a9b59"/><rect x="745.15" y="323.100" width="16.100" height="2.100" fill="#e6fff0"/><rect x="750.05" y="318.200" width="2.200" height="15.800" fill="#e6fff0"/></g>
<g><rect x="1117.75" y="316" width="19.900" height="20.100" rx="2.500" fill="#1a9b59"/><rect x="1119.85" y="323.100" width="16.100" height="2.100" fill="#e6fff0"/><rect x="1124.75" y="318.200" width="2.200" height="15.800" fill="#e6fff0"/></g>
<g><rect x="1492.05" y="316" width="19.900" height="20.100" rx="2.500" fill="#1a9b59"/><rect x="1494.15" y="323.100" width="16.100" height="2.100" fill="#e6fff0"/><rect x="1499.05" y="318.200" width="2.200" height="15.800" fill="#e6fff0"/></g>
</svg>

<div id="botcover" class="abs"></div>
<!-- RED ANNOTATIONS -->
<svg id="anno" width="1921" height="882" viewBox="0 0 1921 882" style="left:0;top:0" shape-rendering="crispEdges">
<ellipse cx="162.200" cy="339.700" rx="154.500" ry="47.700" fill="none" stroke="#e81c24" stroke-width="5"/>
<ellipse cx="523.700" cy="412.800" rx="211.800" ry="168.800" fill="none" stroke="#e81c24" stroke-width="5"/>
</svg>
</body>
</html>
